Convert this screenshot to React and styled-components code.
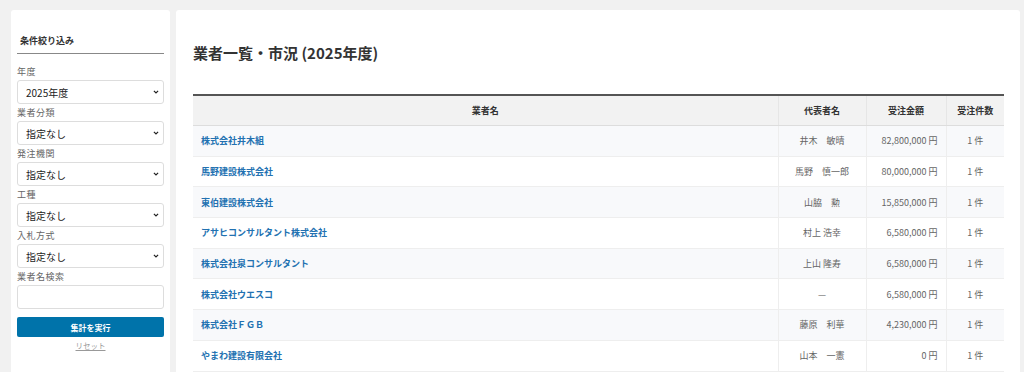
import styled, { createGlobalStyle } from 'styled-components';

const GlobalStyle = createGlobalStyle`
  html, body {
    margin: 0;
    padding: 0;
    background: #f1f1f1;
    font-family: "Noto Sans CJK JP", "Noto Sans", sans-serif;
    color: #333;
  }
`;

const filters = [
  { label: '年度', value: '2025年度' },
  { label: '業者分類', value: '指定なし' },
  { label: '発注機関', value: '指定なし' },
  { label: '工種', value: '指定なし' },
  { label: '入札方式', value: '指定なし' }
];

const rows = [
  { name: '株式会社井木組', rep: '井木　敏晴', amount: '82,800,000 円', count: '1 件' },
  { name: '馬野建設株式会社', rep: '馬野　慎一郎', amount: '80,000,000 円', count: '1 件' },
  { name: '東伯建設株式会社', rep: '山脇　勲', amount: '15,850,000 円', count: '1 件' },
  { name: 'アサヒコンサルタント株式会社', rep: '村上 浩幸', amount: '6,580,000 円', count: '1 件' },
  { name: '株式会社泉コンサルタント', rep: '上山 隆寿', amount: '6,580,000 円', count: '1 件' },
  { name: '株式会社ウエスコ', rep: '—', amount: '6,580,000 円', count: '1 件' },
  { name: '株式会社ＦＧＢ', rep: '藤原　利華', amount: '4,230,000 円', count: '1 件' },
  { name: 'やまわ建設有限会社', rep: '山本　一憲', amount: '0 円', count: '1 件' }
];

export default function App() {
  return (
    <>
      <GlobalStyle />
      <Page>
        <Sidebar>
          <SideTitle>条件絞り込み</SideTitle>
          {filters.map((f) => (
            <Field key={f.label}>
              <Label>{f.label}</Label>
              <SelectWrap>
                <Select defaultValue={f.value}>
                  <option>{f.value}</option>
                </Select>
                <Chevron viewBox="0 0 10 6">
                  <path d="M1.5 1l3.5 3.5L8.5 1" fill="none" stroke="#222" strokeWidth="2" />
                </Chevron>
              </SelectWrap>
            </Field>
          ))}
          <Field>
            <Label>業者名検索</Label>
            <TextInput type="text" />
          </Field>
          <SubmitButton>集計を実行</SubmitButton>
          <ResetLink href="#">リセット</ResetLink>
        </Sidebar>

        <Main>
          <Title>業者一覧・市況 (2025年度)</Title>
          <Table>
            <colgroup>
              <col style={{ width: 585 }} />
              <col style={{ width: 88 }} />
              <col style={{ width: 80 }} />
              <col style={{ width: 58 }} />
            </colgroup>
            <thead>
              <tr>
                <Th>業者名</Th>
                <Th>代表者名</Th>
                <Th>受注金額</Th>
                <Th>受注件数</Th>
              </tr>
            </thead>
            <tbody>
              {rows.map((r) => (
                <Tr key={r.name}>
                  <Td align="left">
                    <NameLink href="#">{r.name}</NameLink>
                  </Td>
                  <Td align="center">{r.rep}</Td>
                  <Td align="right">{r.amount}</Td>
                  <Td align="center">{r.count}</Td>
                </Tr>
              ))}
            </tbody>
          </Table>
        </Main>
      </Page>
    </>
  );
}

const Page = styled.div`
  display: flex;
  align-items: flex-start;
  gap: 6px;
  width: 1024px;
  padding: 10px 4px 0 11px;
  height: 372px;
  box-sizing: border-box;
  overflow: hidden;
`;

const Sidebar = styled.aside`
  flex: none;
  width: 159px;
  min-width: 0;
  box-sizing: border-box;
  background: #fff;
  border-radius: 3px;
  padding: 24px 6px 40px;
  display: flex;
  flex-direction: column;
`;

const SideTitle = styled.h3`
  margin: 0 0 9px;
  padding: 0 3px 5px;
  font-size: 9px;
  line-height: 14px;
  font-weight: 700;
  color: #333;
  border-bottom: 1px solid #888;
`;

const Field = styled.div`
  display: flex;
  flex-direction: column;
  min-width: 0;
`;

const Label = styled.label`
  font-size: 9px;
  line-height: 17px;
  height: 17px;
  color: #666;
  letter-spacing: 0.5px;
`;

const SelectWrap = styled.div`
  position: relative;
  height: 24px;
  min-width: 0;
`;

const Select = styled.select`
  appearance: none;
  display: block;
  width: 100%;
  min-width: 0;
  height: 24px;
  box-sizing: border-box;
  border: 1px solid #ddd;
  border-radius: 3px;
  background: #fff;
  padding: 0 20px 0 8px;
  font-family: inherit;
  font-size: 10px;
  color: #222;
  outline: none;
`;

const Chevron = styled.svg`
  position: absolute;
  right: 5px;
  top: 10px;
  width: 6px;
  height: 4px;
  pointer-events: none;
`;

const TextInput = styled.input`
  display: block;
  width: 100%;
  min-width: 0;
  height: 24px;
  box-sizing: border-box;
  border: 1px solid #ddd;
  border-radius: 3px;
  outline: none;
  padding: 0 8px;
`;

const SubmitButton = styled.button`
  margin-top: 8px;
  height: 20px;
  border: none;
  border-radius: 2px;
  background: #0073aa;
  color: #fff;
  font-family: inherit;
  font-size: 8px;
  font-weight: 700;
  cursor: pointer;
`;

const ResetLink = styled.a`
  align-self: center;
  margin-top: 3px;
  font-size: 7.5px;
  line-height: 11px;
  color: #999;
  text-decoration: underline;
`;

const Main = styled.main`
  flex: none;
  width: 844px;
  background: #fff;
  border-radius: 3px;
  padding: 32px 16px 0 17px;
  height: 400px;
  box-sizing: border-box;
`;

const Title = styled.h1`
  margin: 0 0 30px;
  font-size: 15px;
  line-height: 22px;
  font-weight: 700;
  color: #333;
`;

const Table = styled.table`
  width: 811px;
  table-layout: fixed;
  border-collapse: collapse;
  border-top: 2px solid #555;
`;

const Th = styled.th`
  height: 29px;
  padding: 0 8px;
  background: #f2f2f2;
  border-bottom: 1px solid #ddd;
  border-left: 1px solid #e6e6e6;
  font-size: 9px;
  font-weight: 700;
  color: #333;
  text-align: center;

  &:first-child {
    border-left: none;
  }
`;

const Tr = styled.tr`
  &:nth-child(odd) {
    background: #f8f9fb;
  }
`;

const Td = styled.td`
  height: 29.7px;
  padding: 0 8px;
  border-bottom: 1px solid #eee;
  border-left: 1px solid #eee;
  font-size: 9px;
  color: #666;
  text-align: ${(p) => p.align};
  white-space: nowrap;

  &:first-child {
    border-left: none;
  }
`;

const NameLink = styled.a`
  color: #2271b1;
  font-weight: 700;
  text-decoration: none;
`;
